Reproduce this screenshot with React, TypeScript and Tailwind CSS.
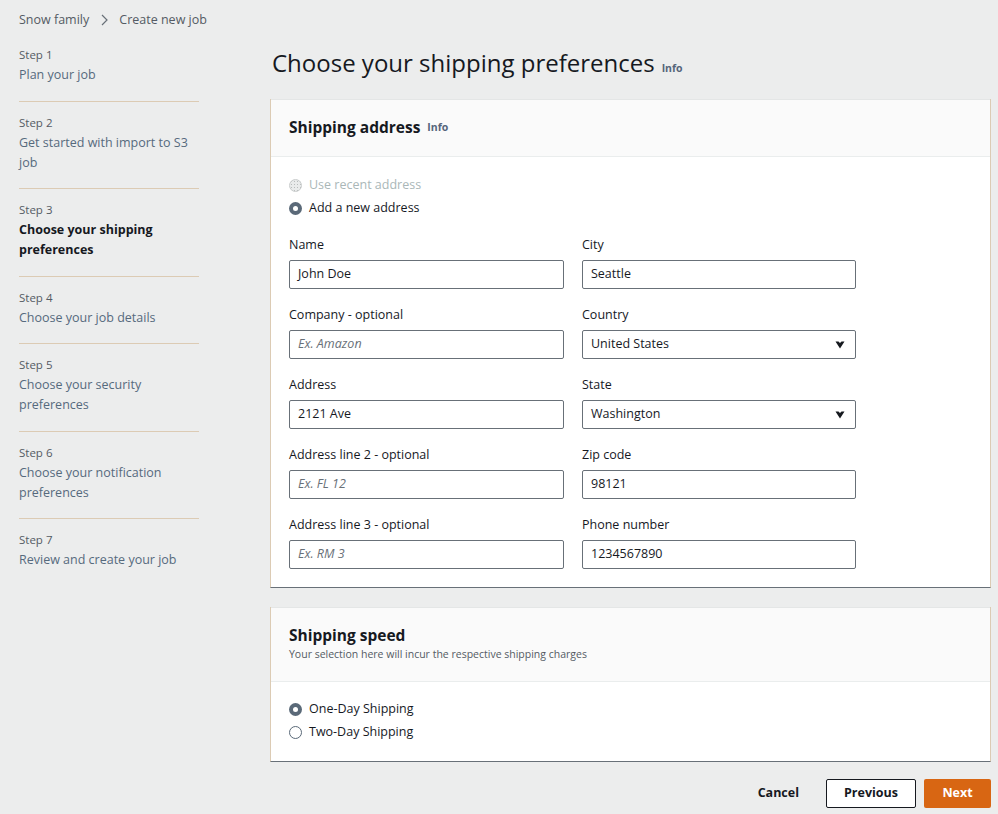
import React from "react";

const font = { fontFamily: '"Open Sans", "Noto Sans", sans-serif' };

function Radio({ state, label }: { state: "on" | "off" | "disabled"; label: string }) {
  return (
    <div className="flex h-5 items-center gap-[7px]">
      {state === "on" && (
        <span className="flex h-[13px] w-[13px] items-center justify-center rounded-full bg-[#5a6978]">
          <span className="h-[5px] w-[5px] rounded-full bg-white" />
        </span>
      )}
      {state === "off" && (
        <span className="h-[13px] w-[13px] rounded-full border border-[#5a6978] bg-white" />
      )}
      {state === "disabled" && (
        <span className="h-[13px] w-[13px] rounded-full border border-[#c9cccc] bg-[radial-gradient(#b8bcbc_1px,#e9ebeb_1px)] bg-[length:3px_3px]" />
      )}
      <span className={`text-[12.5px] ${state === "disabled" ? "text-[#aab7b8]" : "text-[#16191f]"}`}>{label}</span>
    </div>
  );
}

function Field({ label, value, placeholder, select }: { label: string; value?: string; placeholder?: string; select?: boolean }) {
  return (
    <div className="flex flex-col">
      <div className="h-5 text-[12.5px] leading-5 text-[#16191f]">{label}</div>
      <div className="mt-[5px] flex h-[29px] items-center justify-between rounded-[2px] border border-[#687078] bg-white pl-2 pr-[10px]">
        {value ? (
          <span className="text-[12.5px] text-[#16191f]">{value}</span>
        ) : (
          <span className="text-[12.5px] italic text-[#687078]">{placeholder}</span>
        )}
        {select && (
          <svg width="10" height="8" viewBox="0 0 10 8">
            <path d="M0.5 0.5 L3.5 0.5 L5 2 L6.5 0.5 L9.5 0.5 L5 7.5 Z" fill="#16191f" />
          </svg>
        )}
      </div>
    </div>
  );
}

const steps = [
  { n: 1, t: "Plan your job" },
  { n: 2, t: "Get started with import to S3 job" },
  { n: 3, t: "Choose your shipping preferences", active: true },
  { n: 4, t: "Choose your job details" },
  { n: 5, t: "Choose your security preferences" },
  { n: 6, t: "Choose your notification preferences" },
  { n: 7, t: "Review and create your job" },
];

export default function App() {
  return (
    <div style={font} className="flex min-h-[814px] w-[998px] bg-[#eceded] text-[#16191f]">
      {/* Sidebar */}
      <div className="w-[270px] shrink-0 pl-[19px] pt-[10px]">
        <div className="flex h-5 items-center text-[12.5px] leading-5 text-[#545b64]">
          <span>Snow family</span>
          <svg className="ml-[11px] mr-[10px]" width="9" height="12" viewBox="0 0 9 12">
            <path d="M2 1 L7 6 L2 11" fill="none" stroke="#687078" strokeWidth="1.2" />
          </svg>
          <span>Create new job</span>
        </div>
        <div className="mt-1 w-[180px]">
          {steps.map((s, i) => (
            <div key={s.n} className={`pb-[15.5px] pt-[13px] ${i > 0 ? "border-t border-[#dccbb4]" : ""}`}>
              <div className="text-[11.5px] leading-4 text-[#545b64]">Step {s.n}</div>
              <div
                className={`mt-[2px] text-[12.5px] leading-5 ${s.active ? "font-bold text-[#16191f]" : "text-[#566a7d]"}`}
              >
                {s.t}
              </div>
            </div>
          ))}
        </div>
      </div>

      {/* Main */}
      <div className="flex w-[721px] flex-col pt-[45px]">
        <div className="flex items-baseline gap-[7px] pl-[2px]">
          <h1 className="text-[24px] leading-9 text-[#16191f]">Choose your shipping preferences</h1>
          <span className="text-[10.5px] font-bold text-[#55657a]">Info</span>
        </div>

        {/* Shipping address card */}
        <div className="mt-[18px] border-b border-l border-r border-b-[#687078] border-l-[#dccbb4] border-r-[#dccbb4] bg-white">
          <div className="flex h-[58px] items-center gap-[7px] border-b border-t border-b-[#eaeded] border-t-[#e4e6e6] bg-[#fafafa] pl-[18px]">
            <span className="text-[15.5px] font-bold">Shipping address</span>
            <span className="text-[10.5px] font-bold text-[#55657a]">Info</span>
          </div>
          <div className="pb-[18px] pl-[18px] pt-[18px]">
            <div className="flex flex-col gap-[3px]">
              <Radio state="disabled" label="Use recent address" />
              <Radio state="on" label="Add a new address" />
            </div>
            <div className="mt-[17px] grid grid-cols-[275px_274px] gap-x-[18px] gap-y-4">
              <Field label="Name" value="John Doe" />
              <Field label="City" value="Seattle" />
              <Field label="Company - optional" placeholder="Ex. Amazon" />
              <Field label="Country" value="United States" select />
              <Field label="Address" value="2121 Ave" />
              <Field label="State" value="Washington" select />
              <Field label="Address line 2 - optional" placeholder="Ex. FL 12" />
              <Field label="Zip code" value="98121" />
              <Field label="Address line 3 - optional" placeholder="Ex. RM 3" />
              <Field label="Phone number" value="1234567890" />
            </div>
          </div>
        </div>

        {/* Shipping speed card */}
        <div className="mt-[19px] border-b border-l border-r border-b-[#687078] border-l-[#dccbb4] border-r-[#dccbb4] bg-white">
          <div className="border-b border-t border-b-[#eaeded] border-t-[#e4e6e6] bg-[#fafafa] pb-[19px] pl-[18px] pt-4">
            <div className="text-[15.5px] font-bold leading-[22px]">Shipping speed</div>
            <div className="text-[10.5px] leading-4 text-[#545b64]">Your selection here will incur the respective shipping charges</div>
          </div>
          <div className="flex flex-col gap-[3px] pb-[19px] pl-[18px] pt-[17px]">
            <Radio state="on" label="One-Day Shipping" />
            <Radio state="off" label="Two-Day Shipping" />
          </div>
        </div>

        {/* Buttons */}
        <div className="mt-[17px] flex items-center justify-end">
          <button className="mr-[27px] text-[12.5px] font-bold text-[#16191f]">Cancel</button>
          <button className="h-[29px] w-[90px] rounded-[2px] border border-[#16191f] bg-white text-[12.5px] font-bold text-[#16191f]">
            Previous
          </button>
          <button className="ml-2 h-[29px] w-[67px] rounded-[2px] bg-[#d86613] text-[12.5px] font-bold text-white">
            Next
          </button>
        </div>
      </div>
    </div>
  );
}
